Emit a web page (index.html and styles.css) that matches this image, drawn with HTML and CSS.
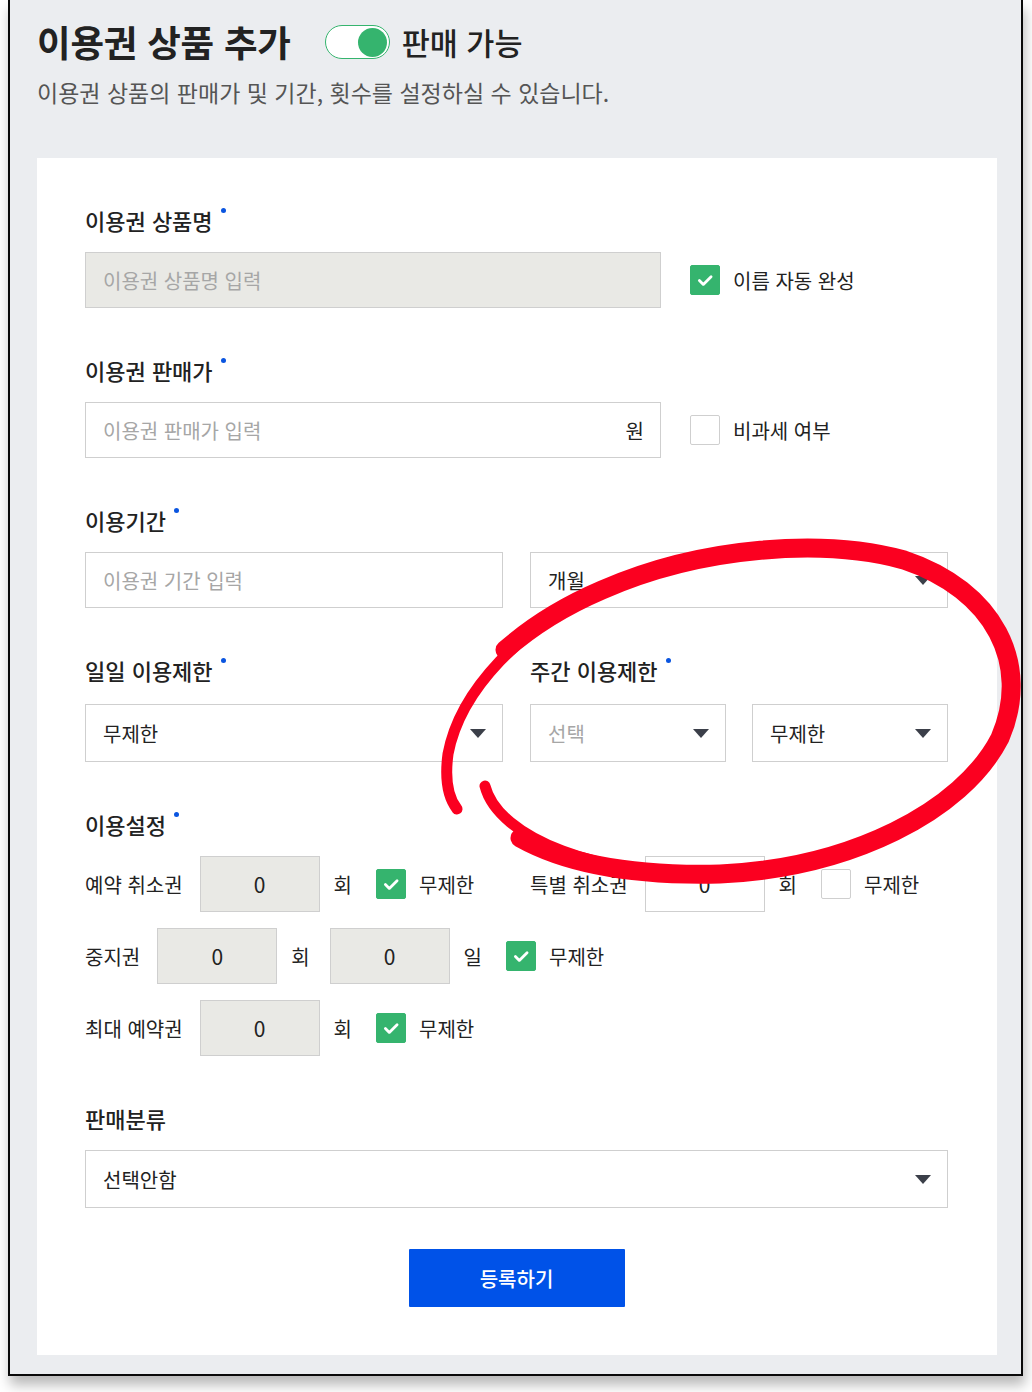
FILE: index.html
```html
<!DOCTYPE html>
<html lang="ko">
<head>
<meta charset="utf-8">
<title>이용권 상품 추가</title>
<link rel="stylesheet" href="styles.css">
</head>
<body>
<div class="frame">
  <header class="head">
    <div class="title-row">
      <h1 class="title">이용권 상품 추가</h1>
      <span class="toggle"><span class="knob"></span></span>
      <span class="toggle-label">판매 가능</span>
    </div>
    <p class="subtitle">이용권 상품의 판매가 및 기간, 횟수를 설정하실 수 있습니다.</p>
  </header>

  <main class="card">
    <section class="field">
      <div class="label">이용권 상품명<span class="req"></span></div>
      <div class="line">
        <div class="input gray wide"><span class="ph">이용권 상품명 입력</span></div>
        <div class="check"><span class="box on"><svg viewBox="0 0 30 30"><path d="M9 15.5l4.2 4.2L21.5 11.5"/></svg></span>이름 자동 완성</div>
      </div>
    </section>

    <section class="field">
      <div class="label">이용권 판매가<span class="req"></span></div>
      <div class="line">
        <div class="input wide"><span class="ph">이용권 판매가 입력</span><span class="suffix">원</span></div>
        <div class="check"><span class="box"></span>비과세 여부</div>
      </div>
    </section>

    <section class="field">
      <div class="label">이용기간<span class="req"></span></div>
      <div class="cols">
        <div class="input"><span class="ph">이용권 기간 입력</span></div>
        <div class="input select"><span>개월</span><span class="arrow"></span></div>
      </div>
    </section>

    <section class="cols field mid">
      <div class="col">
        <div class="label">일일 이용제한<span class="req"></span></div>
        <div class="input select tall"><span>무제한</span><span class="arrow"></span></div>
      </div>
      <div class="col">
        <div class="label">주간 이용제한<span class="req"></span></div>
        <div class="pair">
          <div class="input select tall"><span class="ph">선택</span><span class="arrow"></span></div>
          <div class="input select tall"><span>무제한</span><span class="arrow"></span></div>
        </div>
      </div>
    </section>

    <section class="field">
      <div class="label">이용설정<span class="req"></span></div>
      <div class="rows">
        <div class="cols">
          <div class="set">
            <span class="set-label">예약 취소권</span>
            <div class="num gray">0</div>
            <span class="unit">회</span>
            <div class="check"><span class="box on"><svg viewBox="0 0 30 30"><path d="M9 15.5l4.2 4.2L21.5 11.5"/></svg></span>무제한</div>
          </div>
          <div class="set">
            <span class="set-label">특별 취소권</span>
            <div class="num">0</div>
            <span class="unit">회</span>
            <div class="check"><span class="box"></span>무제한</div>
          </div>
        </div>
        <div class="set">
          <span class="set-label">중지권</span>
          <div class="num gray">0</div>
          <span class="unit tight">회</span>
          <div class="num gray">0</div>
          <span class="unit">일</span>
          <div class="check"><span class="box on"><svg viewBox="0 0 30 30"><path d="M9 15.5l4.2 4.2L21.5 11.5"/></svg></span>무제한</div>
        </div>
        <div class="set">
          <span class="set-label">최대 예약권</span>
          <div class="num gray">0</div>
          <span class="unit">회</span>
          <div class="check"><span class="box on"><svg viewBox="0 0 30 30"><path d="M9 15.5l4.2 4.2L21.5 11.5"/></svg></span>무제한</div>
        </div>
      </div>
    </section>

    <section class="field">
      <div class="label">판매분류</div>
      <div class="input select tall"><span>선택안함</span><span class="arrow"></span></div>
    </section>

    <div class="actions">
      <button class="submit" type="button">등록하기</button>
    </div>
  </main>
</div>

<svg class="scribble" viewBox="0 0 1032 1392" aria-hidden="true">
  <path class="s-thin" d="M485 786 C498 838 600 878 720 874 C850 868 962 812 1000 738 C1032 664 994 590 904 560 C824 538 702 546 602 590 C522 626 460 690 448 754 C444 784 450 800 457 809"/>
  <path class="s-thick" d="M520 838 C570 866 640 876 720 874 C850 868 962 812 1000 738 C1032 664 994 590 904 560 C824 538 702 546 602 590 C560 608 530 628 505 650"/>
</svg>
</body>
</html>
```

FILE: styles.css
```css
* { box-sizing: border-box; }

html, body {
  margin: 0;
  padding: 0;
  background: #ffffff;
}

body {
  position: relative;
  width: 1032px;
  height: 1392px;
  font-family: "Noto Sans CJK KR", "Noto Sans", sans-serif;
  color: #222;
  overflow: hidden;
}

.frame {
  margin-left: 8px;
  width: 1015px;
  background: #ebedf0;
  border: 2px solid #0a0a0a;
  border-top: none;
  padding: 0 24px 19px 27px;
  box-shadow: 2px 9px 12px rgba(0, 0, 0, 0.28);
}

/* header */
.head { padding-top: 18px; }

.title-row {
  display: flex;
  align-items: center;
  height: 48px;
}

.title {
  margin: 0;
  font-size: 36.5px;
  font-weight: 700;
  color: #222;
  line-height: 48px;
  letter-spacing: -0.2px;
}

.toggle {
  margin-left: 34px;
  width: 65px;
  height: 34px;
  border: 1.5px solid #35b46e;
  border-radius: 17px;
  background: #fff;
  display: flex;
  align-items: center;
  justify-content: flex-end;
  padding-right: 2px;
}

.knob {
  width: 29px;
  height: 29px;
  border-radius: 50%;
  background: #35b46e;
}

.toggle-label {
  margin-left: 12px;
  font-size: 30.5px;
  font-weight: 500;
  color: #222;
}

.subtitle {
  margin: 11px 0 0;
  font-size: 23px;
  line-height: 30px;
  color: #555;
}

/* card */
.card {
  margin-top: 51px;
  width: 960px;
  background: #fff;
  padding: 47px 49px 48px 48px;
}

.field + .field { margin-top: 47px; }

.label {
  display: flex;
  align-items: flex-start;
  height: 30px;
  line-height: 30px;
  font-size: 22px;
  font-weight: 500;
  color: #222;
  margin-bottom: 17px;
}

.field.mid .label { margin-bottom: 19px; }

.req {
  width: 5px;
  height: 5px;
  border-radius: 50%;
  background: #0a55e0;
  margin: 3px 0 0 8px;
}

.line {
  display: flex;
  align-items: center;
}

.cols {
  display: grid;
  grid-template-columns: 1fr 1fr;
  column-gap: 27px;
}

.pair {
  display: grid;
  grid-template-columns: 1fr 1fr;
  column-gap: 26px;
}

.input {
  height: 56px;
  border: 1px solid #cfcfcf;
  background: #fff;
  display: flex;
  align-items: center;
  justify-content: space-between;
  padding: 0 16px 0 17px;
  font-size: 20px;
  color: #222;
}

.input.tall { height: 58px; }

.input.gray { background: #e9e9e5; }

.input.wide { width: 576px; }

.ph { color: #a6a6a6; }

.suffix { color: #222; }

.arrow {
  width: 0;
  height: 0;
  border-left: 8px solid transparent;
  border-right: 8px solid transparent;
  border-top: 9px solid #3b3f49;
}

/* checkbox */
.check {
  display: flex;
  align-items: center;
  font-size: 20px;
  color: #222;
  white-space: nowrap;
}

.line .check { margin-left: 29px; }

.box {
  width: 30px;
  height: 30px;
  border: 1px solid #cfcfcf;
  border-radius: 2px;
  background: #fff;
  margin-right: 13px;
  display: flex;
  align-items: center;
  justify-content: center;
}

.box.on {
  background: #35b46e;
  border-color: #35b46e;
}

.box svg {
  width: 30px;
  height: 30px;
}

.box svg path {
  fill: none;
  stroke: #fff;
  stroke-width: 3;
  stroke-linecap: round;
  stroke-linejoin: round;
}

/* settings rows */
.rows {
  display: flex;
  flex-direction: column;
  gap: 16px;
}

.set {
  display: flex;
  align-items: center;
  height: 56px;
}

.set-label {
  font-size: 20px;
  color: #222;
  margin-right: 17px;
  white-space: nowrap;
}

.num {
  width: 120px;
  height: 56px;
  border: 1px solid #cfcfcf;
  background: #fff;
  display: flex;
  align-items: center;
  justify-content: center;
  font-size: 21px;
  color: #222;
}

.num.gray { background: #e9e9e5; }

.unit {
  font-size: 20px;
  color: #222;
  margin: 0 24px 0 14px;
}

.unit.tight { margin-right: 20px; }

/* action */
.actions {
  display: flex;
  justify-content: center;
  margin-top: 41px;
}

.submit {
  width: 216px;
  height: 58px;
  border: none;
  border-radius: 1px;
  background: #0052e8;
  color: #fff;
  font-family: inherit;
  font-size: 20px;
  font-weight: 500;
}

/* hand-drawn highlight overlay */
.scribble {
  position: absolute;
  left: 0;
  top: 0;
  width: 1032px;
  height: 1392px;
  pointer-events: none;
}

.scribble path {
  fill: none;
  stroke: #fb0020;
  stroke-linecap: round;
  stroke-linejoin: round;
}

.s-thin { stroke-width: 11; }
.s-thick { stroke-width: 19; }
```
